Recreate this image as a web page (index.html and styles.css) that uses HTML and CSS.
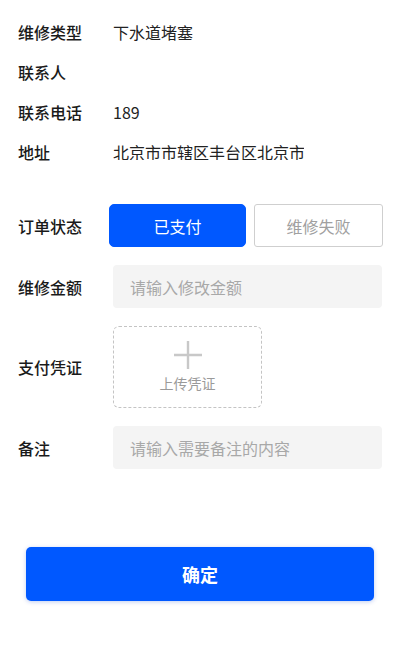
FILE: index.html
```html
<!DOCTYPE html>
<html lang="zh">
<head>
<meta charset="utf-8">
<link rel="stylesheet" href="styles.css">
</head>
<body>
<div class="page">
  <div class="info">
    <div class="row"><span class="label">维修类型</span><span class="value">下水道堵塞</span></div>
    <div class="row"><span class="label">联系人</span><span class="value"></span></div>
    <div class="row"><span class="label">联系电话</span><span class="value">189</span></div>
    <div class="row"><span class="label">地址</span><span class="value clip">北京市市辖区丰台区北京市</span></div>
  </div>
  <div class="form">
    <div class="frow">
      <span class="label label-status">订单状态</span>
      <div class="status">
        <button class="btn active">已支付</button>
        <button class="btn">维修失败</button>
      </div>
    </div>
    <div class="frow">
      <span class="label">维修金额</span>
      <div class="input">请输入修改金额</div>
    </div>
    <div class="frow">
      <span class="label">支付凭证</span>
      <div class="upload">
        <svg class="plus" width="30" height="30" viewBox="0 0 30 30"><path d="M15 1V29M1 15H29" stroke="#c8c8c8" stroke-width="2.4" fill="none"/></svg>
        <span class="upload-text">上传凭证</span>
      </div>
    </div>
    <div class="frow">
      <span class="label">备注</span>
      <div class="input">请输入需要备注的内容</div>
    </div>
  </div>
  <div class="submit-wrap">
    <button class="submit">确定</button>
  </div>
</div>
</body>
</html>
```
FILE: styles.css
```css
* { box-sizing: border-box; }
html, body { margin: 0; padding: 0; background: #fff; }
body {
  font-family: "Noto Sans CJK SC", "Noto Sans", sans-serif;
  color: #222;
  width: 400px;
  height: 650px;
  overflow: hidden;
}
.page { padding: 12px 18px 0 18px; }
.info { display: flex; flex-direction: column; }
.row {
  height: 40px;
  display: flex;
  align-items: center;
}
.label {
  width: 95px;
  flex: none;
  font-size: 16px;
  font-weight: 500;
  color: #1a1a1a;
  line-height: 1;
}
.label-status { width: 91px; }
.value {
  font-size: 16px;
  color: #222;
  line-height: 1;
}
.clip {
  width: 191px;
  overflow: hidden;
  white-space: nowrap;
}
.form {
  margin-top: 32px;
  display: flex;
  flex-direction: column;
  gap: 18px;
}
.frow {
  display: flex;
  align-items: center;
}
.status { display: flex; gap: 8px; }
.btn {
  height: 43px;
  width: 129px;
  border: 1px solid #cfcfcf;
  background: #fff;
  color: #a0a0a0;
  font-family: inherit;
  font-size: 16px;
  border-radius: 3px;
  padding: 0;
}
.btn.active {
  width: 137px;
  background: #0058ff;
  border-color: #0058ff;
  color: #fff;
  border-radius: 5px;
}
.input {
  width: 270px;
  height: 43px;
  background: #f4f4f4;
  border-radius: 4px;
  padding-left: 17px;
  display: flex;
  align-items: center;
  font-size: 16px;
  color: #a8a8a8;
}
.upload {
  width: 149px;
  height: 82px;
  border: 1px dashed #c4c4c4;
  border-radius: 6px;
  display: flex;
  flex-direction: column;
  align-items: center;
  padding-top: 13px;
}
.plus { display: block; }
.upload-text {
  margin-top: 6px;
  font-size: 14px;
  color: #9a9a9a;
  line-height: 1;
}
.submit-wrap {
  margin-top: 78px;
  padding: 0 8px;
}
.submit {
  width: 348px;
  height: 54px;
  background: #0058ff;
  color: #fff;
  border: none;
  border-radius: 5px;
  font-family: inherit;
  font-size: 18px;
  font-weight: 700;
  box-shadow: 0 1px 4px rgba(0, 60, 200, 0.25);
}
```
